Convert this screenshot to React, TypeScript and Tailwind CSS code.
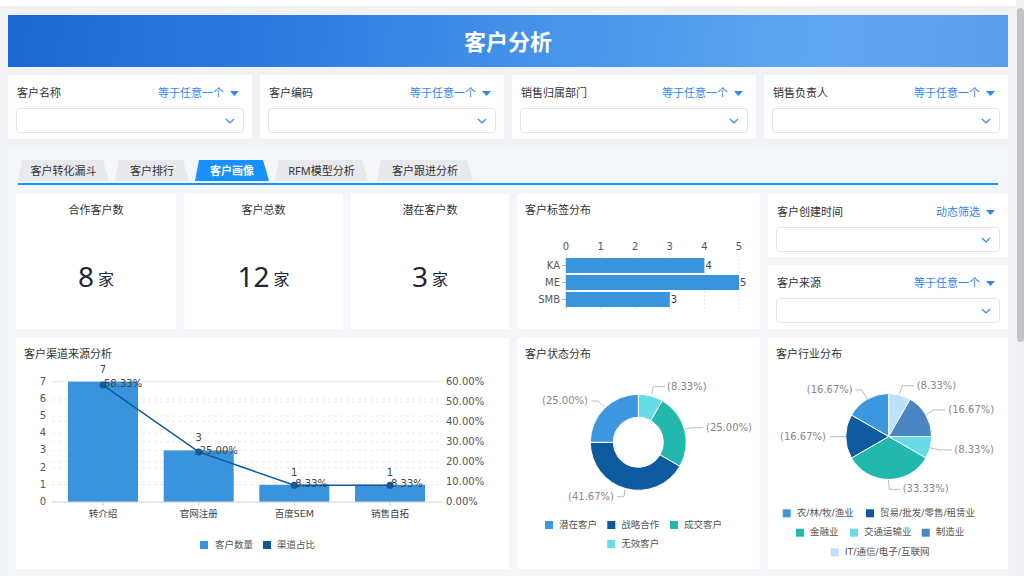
import React from "react";

const BLUE = "#3a93dd";
const DARK = "#0d5a9f";
const TEAL = "#22b8ad";
const CYAN = "#67dce6";
const STEEL = "#4a87c2";
const PALE = "#bfe0fa";
const CHART_FONT = "DejaVu Sans, Noto Sans CJK SC, sans-serif";

// angle in degrees, 0 = top, clockwise
function pt(cx: number, cy: number, r: number, a: number): [number, number] {
  const t = (a * Math.PI) / 180;
  return [cx + r * Math.sin(t), cy - r * Math.cos(t)];
}

function sector(cx: number, cy: number, ri: number, ro: number, a0: number, a1: number) {
  const large = a1 - a0 > 180 ? 1 : 0;
  const [x0, y0] = pt(cx, cy, ro, a0);
  const [x1, y1] = pt(cx, cy, ro, a1);
  if (ri === 0) {
    return `M${cx} ${cy} L${x0} ${y0} A${ro} ${ro} 0 ${large} 1 ${x1} ${y1} Z`;
  }
  const [xi0, yi0] = pt(cx, cy, ri, a0);
  const [xi1, yi1] = pt(cx, cy, ri, a1);
  return `M${x0} ${y0} A${ro} ${ro} 0 ${large} 1 ${x1} ${y1} L${xi1} ${yi1} A${ri} ${ri} 0 ${large} 0 ${xi0} ${yi0} Z`;
}

function Caret() {
  return (
    <svg width="9" height="5" viewBox="0 0 9 5">
      <polygon points="0,0 9,0 4.5,5" fill="#2f88ee" />
    </svg>
  );
}

function Chevron() {
  return (
    <svg width="10" height="6" viewBox="0 0 10 6">
      <polyline points="1,1 5,5 9,1" fill="none" stroke="#2f88ee" strokeWidth="1.2" />
    </svg>
  );
}

function FilterBox({ label, mode, className = "" }: { label: string; mode: string; className?: string }) {
  return (
    <div className={`bg-white px-2 pt-[10px] ${className}`}>
      <div className="flex items-center justify-between pl-px pr-[5px] text-[11px] leading-4">
        <span className="text-[#333]">{label}</span>
        <span className="flex items-center gap-[6px] text-[#2f88ee]">
          {mode}
          <Caret />
        </span>
      </div>
      <div className="mt-[7px] flex h-[25px] items-center justify-end rounded border border-[#e3e5ea] pr-2">
        <Chevron />
      </div>
    </div>
  );
}

function Kpi({ title, value }: { title: string; value: string }) {
  return (
    <div className="flex flex-col bg-white pt-2">
      <div className="text-center text-[11px] leading-4 text-[#333]">{title}</div>
      <div className="flex flex-1 items-center justify-center gap-1 pt-[5px] text-[#1e2633]">
        <span className="text-[28px] leading-none">{value}</span>
        <span className="mt-[5px] text-[16px] leading-none">家</span>
      </div>
    </div>
  );
}

function TagChart() {
  const x0 = 49;
  const step = 34.6;
  const rows = [
    { name: "KA", v: 4, y: 40 },
    { name: "ME", v: 5, y: 57 },
    { name: "SMB", v: 3, y: 74 },
  ];
  return (
    <svg width="243" height="111" fontFamily={CHART_FONT}>
      {[1, 2, 3, 4, 5].map((k) => (
        <line key={k} x1={x0 + k * step} x2={x0 + k * step} y1={37} y2={91} stroke="#e6e6e6" strokeDasharray="2 2" />
      ))}
      <line x1={x0} x2={x0} y1={37} y2={91} stroke="#cfcfcf" />
      {[0, 1, 2, 3, 4, 5].map((k) => (
        <text key={k} x={x0 + k * step} y={29} fontSize="10" fill="#555" textAnchor="middle" dominantBaseline="middle">
          {k}
        </text>
      ))}
      {rows.map((r) => (
        <g key={r.name}>
          <rect x={x0} y={r.y} width={r.v * step} height={15} fill={BLUE} />
          <text x={x0 + r.v * step + 1} y={r.y + 8} fontSize="10" fill="#444" dominantBaseline="middle">
            {r.v}
          </text>
          <text x={43} y={r.y + 8} fontSize="10" fill="#555" textAnchor="end" dominantBaseline="middle">
            {r.name}
          </text>
          <line x1={45} x2={x0} y1={r.y + 7.5} y2={r.y + 7.5} stroke="#bbb" />
        </g>
      ))}
    </svg>
  );
}

function ChannelChart() {
  const base = 140;
  const unit = 17.19;
  const pct = 120.3 / 60;
  const data = [
    { name: "转介绍", v: 7, p: 58.33, x: 87 },
    { name: "官网注册", v: 3, p: 25, x: 182.7 },
    { name: "百度SEM", v: 1, p: 8.33, x: 278.3 },
    { name: "销售自拓", v: 1, p: 8.33, x: 374 },
  ];
  const line = data.map((d) => `${d.x},${base - d.p * pct}`).join(" ");
  return (
    <svg width="493" height="207" fontFamily={CHART_FONT}>
      {[1, 2, 3, 4, 5, 6].map((k) => (
        <line key={"l" + k} x1={36} x2={426} y1={base - k * unit} y2={base - k * unit} stroke="#ececec" strokeDasharray="3 3" />
      ))}
      {[1, 2, 3, 4, 5].map((k) => (
        <line key={"r" + k} x1={36} x2={426} y1={base - k * 20.05} y2={base - k * 20.05} stroke="#ececec" strokeDasharray="3 3" />
      ))}
      <line x1={36} x2={426} y1={base - 7 * unit} y2={base - 7 * unit} stroke="#e6e6e6" />
      {[0, 1, 2, 3, 4, 5, 6, 7].map((k) => (
        <text key={k} x={30} y={base - k * unit} fontSize="10" fill="#555" textAnchor="end" dominantBaseline="middle">
          {k}
        </text>
      ))}
      {[0, 1, 2, 3, 4, 5, 6].map((k) => (
        <text key={k} x={430} y={base - k * 20.05} fontSize="10" fill="#555" dominantBaseline="middle">
          {k * 10}.00%
        </text>
      ))}
      {data.map((d) => (
        <g key={d.name}>
          <rect x={d.x - 35} y={base - d.v * unit} width={70} height={d.v * unit} fill={BLUE} />
          <text x={d.x} y={base - d.v * unit - 12} fontSize="10" fill="#444" textAnchor="middle" dominantBaseline="middle">
            {d.v}
          </text>
          <line x1={d.x} x2={d.x} y1={base} y2={base + 4} stroke="#ccc" />
          <text x={d.x} y={152} fontSize="9.5" fill="#444" textAnchor="middle" dominantBaseline="middle">
            {d.name}
          </text>
        </g>
      ))}
      <line x1={36} x2={426} y1={base} y2={base} stroke="#cfcfcf" />
      <polyline points={line} fill="none" stroke={DARK} strokeWidth="1.5" />
      {data.map((d) => (
        <g key={"p" + d.name}>
          <circle cx={d.x} cy={base - d.p * pct} r={3.5} fill={DARK} />
          <text x={d.x + 1} y={base - d.p * pct - 1} fontSize="10" fill="#444" dominantBaseline="middle">
            {d.p.toFixed(2)}%
          </text>
        </g>
      ))}
      <rect x={184} y={179} width={8} height={8} fill={BLUE} />
      <text x={199} y={183} fontSize="9.5" fill="#555" dominantBaseline="middle">
        客户数量
      </text>
      <rect x={247} y={179} width={8} height={8} fill={DARK} />
      <text x={261} y={183} fontSize="9.5" fill="#555" dominantBaseline="middle">
        渠道占比
      </text>
    </svg>
  );
}

type Slice = { c: string; a0: number; a1: number };
type Lbl = { pts: string; x: number; y: number; anchor: "start" | "end"; t: string };

function Legend({ items }: { items: { c: string; x: number; y: number; t: string }[] }) {
  return (
    <>
      {items.map((i) => (
        <g key={i.t}>
          <rect x={i.x} y={i.y - 4} width={8} height={8} fill={i.c} />
          <text x={i.x + 14} y={i.y} fontSize="9.5" fill="#555" dominantBaseline="middle">
            {i.t}
          </text>
        </g>
      ))}
    </>
  );
}

function Labels({ items }: { items: Lbl[] }) {
  return (
    <>
      {items.map((l, i) => (
        <g key={i}>
          <polyline points={l.pts} fill="none" stroke="#bbb" strokeWidth="1" />
          <text x={l.x} y={l.y} fontSize="10" fill="#888" textAnchor={l.anchor} dominantBaseline="middle">
            {l.t}
          </text>
        </g>
      ))}
    </>
  );
}

function StatusChart() {
  const cx = 121.3;
  const cy = 80.3;
  const slices: Slice[] = [
    { c: CYAN, a0: 0, a1: 30 },
    { c: TEAL, a0: 30, a1: 120 },
    { c: DARK, a0: 120, a1: 270 },
    { c: "#3d97e0", a0: 270, a1: 360 },
  ];
  const labels: Lbl[] = [
    { pts: "134.7,32 136.3,24.7 148,24.7", x: 150, y: 24.7, anchor: "start", t: "(8.33%)" },
    { pts: "168,67.3 174,65.7 186.3,65.7", x: 189, y: 65.7, anchor: "start", t: "(25.00%)" },
    { pts: "108,127.3 107,134.7 100,134.7", x: 97, y: 134.7, anchor: "end", t: "(41.67%)" },
    { pts: "87.3,44.7 81.3,39 74.7,39", x: 71, y: 39, anchor: "end", t: "(25.00%)" },
  ];
  return (
    <svg width="236" height="207" fontFamily={CHART_FONT}>
      {slices.map((s) => (
        <path key={s.c} d={sector(cx, cy, 25, 48, s.a0, s.a1)} fill={s.c} stroke="#fff" strokeWidth="1" />
      ))}
      <Labels items={labels} />
      <Legend
        items={[
          { c: "#3d97e0", x: 28, y: 163, t: "潜在客户" },
          { c: DARK, x: 90.3, y: 163, t: "战略合作" },
          { c: TEAL, x: 153, y: 163, t: "成交客户" },
          { c: CYAN, x: 90.3, y: 182, t: "无效客户" },
        ]}
      />
    </svg>
  );
}

function IndustryChart() {
  const cx = 120.7;
  const cy = 74.5;
  const slices: Slice[] = [
    { c: PALE, a0: 0, a1: 30 },
    { c: STEEL, a0: 30, a1: 90 },
    { c: CYAN, a0: 90, a1: 120 },
    { c: TEAL, a0: 120, a1: 240 },
    { c: DARK, a0: 240, a1: 300 },
    { c: "#3d97e0", a0: 300, a1: 360 },
  ];
  const labels: Lbl[] = [
    { pts: "131.3,32.3 134.3,23.7 146,23.7", x: 148.7, y: 23.7, anchor: "start", t: "(8.33%)" },
    { pts: "157.9,53.2 165,48 177,48", x: 180.3, y: 48, anchor: "start", t: "(16.67%)" },
    { pts: "161.5,85.7 172,88 183.7,88", x: 186.3, y: 87.5, anchor: "start", t: "(8.33%)" },
    { pts: "120.3,118 121.3,127.3 132,127.3", x: 134.7, y: 127.3, anchor: "start", t: "(33.33%)" },
    { pts: "77.7,74.7 62,74.7", x: 58, y: 74.7, anchor: "end", t: "(16.67%)" },
    { pts: "99.3,37 93.7,28 87,28", x: 84.7, y: 28, anchor: "end", t: "(16.67%)" },
  ];
  return (
    <svg width="240" height="207" fontFamily={CHART_FONT}>
      {slices.map((s) => (
        <path key={s.c + s.a0} d={sector(cx, cy, 0, 43, s.a0, s.a1)} fill={s.c} stroke="#fff" strokeWidth="1" />
      ))}
      <Labels items={labels} />
      <Legend
        items={[
          { c: "#3d97e0", x: 14.7, y: 151.3, t: "农/林/牧/渔业" },
          { c: DARK, x: 98, y: 151.3, t: "贸易/批发/零售/租赁业" },
          { c: TEAL, x: 28, y: 170.7, t: "金融业" },
          { c: CYAN, x: 82, y: 170.7, t: "交通运输业" },
          { c: STEEL, x: 153.7, y: 170.7, t: "制造业" },
          { c: PALE, x: 62.7, y: 190.3, t: "IT/通信/电子/互联网" },
        ]}
      />
    </svg>
  );
}

function ChartCard({ title, children, className = "" }: { title: string; children: React.ReactNode; className?: string }) {
  return (
    <div className={`overflow-hidden bg-white ${className}`}>
      <div className="px-2 pt-2 text-[11px] leading-4 text-[#333]">{title}</div>
      {children}
    </div>
  );
}

const tabs = [
  { t: "客户转化漏斗", w: "w-[91px]" },
  { t: "客户排行", w: "w-[74px]" },
  { t: "客户画像", w: "w-[74px]" },
  { t: "RFM模型分析", w: "w-[93px]" },
  { t: "客户跟进分析", w: "w-[96px] ml-[3px]" },
];

export default function App() {
  return (
    <div className="flex h-[576px] w-[1024px] overflow-hidden bg-[#f0f2f5] font-['Noto_Sans','Noto_Sans_CJK_SC',sans-serif]">
      <div className="w-[1016px]">
        <div className="h-[6px] bg-white" />
        <div className="px-2 pt-[9px]">
          <header className="flex h-[52px] items-center justify-center bg-[linear-gradient(95deg,#1b69d3_0%,#2c7edf_30%,#4794ea_55%,#62a7f2_82%,#5a9eea_100%)]">
            <h1 className="text-[22px] font-bold leading-none text-white">客户分析</h1>
          </header>

          <div className="mt-2 grid h-[64px] grid-cols-4 gap-2">
            <FilterBox label="客户名称" mode="等于任意一个" />
            <FilterBox label="客户编码" mode="等于任意一个" />
            <FilterBox label="销售归属部门" mode="等于任意一个" />
            <FilterBox label="销售负责人" mode="等于任意一个" />
          </div>

          <section className="mt-[9px] h-[440px] bg-[#f5f6f9] pt-3">
            <div className="mx-[10px] flex gap-[6px] border-b-2 border-[#1890ff] pb-[2px]">
              {tabs.map((tab) => (
                <div
                  key={tab.t}
                  className={`flex h-[21px] items-center justify-center pt-px text-[11px] [clip-path:polygon(4px_0,calc(100%_-_6px)_0,100%_100%,0_100%)] ${tab.w} ${
                    tab.t === "客户画像" ? "bg-[#1890ff] font-bold text-white" : "bg-[#e7e9ed] text-[#333]"
                  }`}
                >
                  {tab.t}
                </div>
              ))}
            </div>

            <div className="mt-[9px] grid grid-cols-[160px_159px_158px_243px_240px] grid-rows-[135px_231px] gap-x-2 gap-y-[9px] pl-2">
              <Kpi title="合作客户数" value="8" />
              <Kpi title="客户总数" value="12" />
              <Kpi title="潜在客户数" value="3" />
              <ChartCard title="客户标签分布">
                <TagChart />
              </ChartCard>
              <div className="flex flex-col gap-2">
                <FilterBox label="客户创建时间" mode="动态筛选" className="h-[63px]" />
                <FilterBox label="客户来源" mode="等于任意一个" className="h-[64px]" />
              </div>

              <ChartCard title="客户渠道来源分析" className="col-span-3">
                <ChannelChart />
              </ChartCard>
              <ChartCard title="客户状态分布">
                <StatusChart />
              </ChartCard>
              <ChartCard title="客户行业分布">
                <IndustryChart />
              </ChartCard>
            </div>
          </section>
        </div>
      </div>
      <div className="w-2 bg-[#f1f1f3]">
        <div className="ml-px mt-2 h-[334px] rounded-full bg-[#c1c3c9]" />
      </div>
    </div>
  );
}
